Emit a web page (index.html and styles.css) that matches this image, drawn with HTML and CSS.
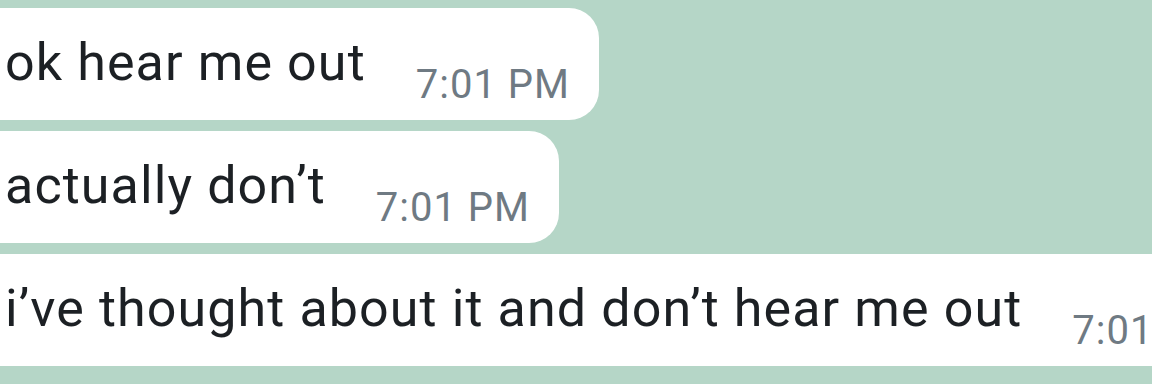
FILE: index.html
```html
<!DOCTYPE html>
<html lang="en">

<head>
    <meta charset="UTF-8">
    <meta name="viewport" content="width=device-width, initial-scale=1.0">
    <title>chat</title>
    <link rel="stylesheet" href="styles.css">
</head>

<body>
    <div class="chat">
        <div class="msg">
            <span class="text">ok hear me out</span>
            <span class="time">7:01 PM</span>
        </div>
        <div class="msg">
            <span class="text">actually don’t</span>
            <span class="time">7:01 PM</span>
        </div>
        <div class="msg wide">
            <span class="text">i’ve thought about it and don’t hear me out</span>
            <span class="time">7:01 PM</span>
        </div>
    </div>
</body>

</html>
```

FILE: styles.css
```css
* {
    margin: 0;
    padding: 0;
    box-sizing: border-box;
}

body {
    background: #b5d6c7;
    font-family: Roboto, "Noto Sans", sans-serif;
    overflow: hidden;
    width: 1152px;
    height: 384px;
}

.chat {
    display: flex;
    flex-direction: column;
    align-items: flex-start;
    gap: 11px;
    padding-top: 8px;
    margin-left: -40px;
}

.msg {
    display: flex;
    align-items: flex-end;
    height: 112px;
    padding: 0 29px 0 45px;
    background: #fff;
    border-radius: 30px;
    white-space: nowrap;
}

.msg .text {
    font-size: 52px;
    line-height: 60px;
    letter-spacing: 1.1px;
    color: #1c2024;
    margin-bottom: 27px;
}

.msg .time {
    font-size: 40px;
    line-height: 36px;
    letter-spacing: 1px;
    color: #6f7a83;
    margin-left: 50px;
    margin-bottom: 17px;
}

.wide {
    width: 1300px;
}
```
